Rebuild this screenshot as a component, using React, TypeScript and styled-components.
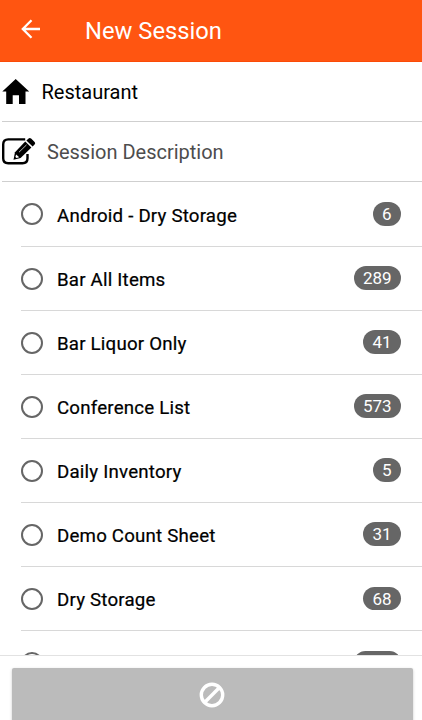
import React from "react";
import styled, { createGlobalStyle } from "styled-components";

const GlobalStyle = createGlobalStyle`
  *, *::before, *::after { box-sizing: border-box; }
  body { margin: 0; background: #fff; overflow: hidden; }
`;

const Screen = styled.div`
  display: flex;
  flex-direction: column;
  width: 100%;
  height: 100vh;
  overflow: hidden;
  background: #fff;
  color: #000;
  font-family: Roboto, "Liberation Sans", sans-serif;
`;

const Header = styled.header`
  display: flex;
  flex: none;
  align-items: center;
  height: 62px;
  padding-left: 21px;
  background: #ff5511;
  border-bottom: 1px solid #fa4b08;
  color: #fff;
`;

const BackButton = styled.button`
  display: flex;
  width: 64px;
  padding: 0;
  border: 0;
  background: none;
  margin-top: -3px;
`;

const Title = styled.h1`
  margin: 0;
  font-size: 23.75px;
  line-height: 30px;
  font-weight: 400;
`;

const Field = styled.div<{ $gap: number; $muted?: boolean }>`
  display: flex;
  flex: none;
  align-items: center;
  gap: ${(p) => p.$gap}px;
  height: 60px;
  margin-left: 2px;
  border-bottom: 1px solid #cfcfcf;
  font-size: 20px;
  line-height: 24px;
  color: ${(p) => (p.$muted ? "#4d4d4d" : "#000")};

  svg { flex: none; }
`;

const List = styled.ul`
  flex: 1;
  min-height: 0;
  margin: 0;
  padding: 0.55px 0 0 21px;
  list-style: none;
  overflow: hidden;
`;

const Row = styled.li`
  display: flex;
  align-items: center;
  height: 64.07px;
  padding-right: 21px;
  border-bottom: 1px solid #d8d8d8;
`;

const Radio = styled.span`
  flex: none;
  width: 22px;
  height: 22px;
  margin: 0.8px 14px 0 0;
  border: 2px solid #666;
  border-radius: 50%;
`;

const Name = styled.span`
  flex: 1;
  padding-top: 3px;
  font-size: 18.7px;
  line-height: 24px;
  letter-spacing: 0.2px;
  -webkit-text-stroke: 0.22px #000;
`;

const Badge = styled.span`
  height: 23.5px;
  margin-bottom: 0.3px;
  padding: 0 9.4px;
  border-radius: 12px;
  background: #666;
  color: #fff;
  font-size: 17px;
  line-height: 25px;
`;

const Footer = styled.footer`
  flex: none;
  height: 65px;
  padding: 12px 9px 0 11.5px;
  border-top: 1px solid #e2e2e2;
  background: #fff;
`;

const SubmitButton = styled.button`
  display: flex;
  justify-content: center;
  width: 100%;
  height: 58px;
  padding: 14px 0 0;
  border: 0;
  border-radius: 2px;
  background: #bbb;
  box-shadow: 0 1px 3px rgba(0, 0, 0, 0.22);
`;

const sheets = [
  { name: "Android - Dry Storage", count: 6 },
  { name: "Bar All Items", count: 289 },
  { name: "Bar Liquor Only", count: 41 },
  { name: "Conference List", count: 573 },
  { name: "Daily Inventory", count: 5 },
  { name: "Demo Count Sheet", count: 31 },
  { name: "Dry Storage", count: 68 },
  { name: "Food Items", count: 124 },
];

const BackIcon = () => (
  <svg width="20" height="20" viewBox="0 0 20 20" fill="none" stroke="#fff" strokeWidth="2.3">
    <path d="M10.5 1.2 L1.8 10 L10.5 18.8 M2 10 H19" />
  </svg>
);

const HomeIcon = () => (
  <svg width="28" height="26" viewBox="0 0 28 26">
    <path d="M13.7 0 L27.2 12.6 H23.5 V25 H17 V16.2 H10.7 V25 H4.2 V12.6 H0.3 Z" />
  </svg>
);

const EditIcon = () => (
  <svg width="34" height="30" viewBox="0 0 34 30" fill="none">
    <path
      d="M23.2 2.4 H6.2 Q1.2 2.4 1.2 7.4 V21.3 Q1.2 26.3 6.2 26.3 H20.5 Q25.5 26.3 25.5 21.3 V17"
      stroke="#000"
      strokeWidth="2.4"
    />
    <g transform="translate(0 -1)">
      <path d="M23.2 5.6 L29.4 11.6 L18.6 22 L11.5 23.8 L13 16.2 Z" fill="#000" />
      <path d="M24.4 4.5 L26.6 2.4 Q27.8 1.3 29.1 2.6 L32.6 6 Q33.8 7.4 32.6 8.6 L30.6 10.5 Z" fill="#000" />
      <path d="M17 16.2 L24.5 8.9" stroke="#bbb" strokeWidth="1" />
      <path d="M14.1 18.4 L17.2 21.3 L14.6 22 L13.4 20.9 Z" fill="#fff" />
    </g>
  </svg>
);

const BlockedIcon = () => (
  <svg width="26" height="26" viewBox="0 0 26 26" fill="none" stroke="#fff" strokeWidth="3.4">
    <circle cx="13" cy="13" r="10.7" />
    <path d="M5.8 20.2 L20.2 5.8" />
  </svg>
);

export default function App() {
  return (
    <Screen>
      <GlobalStyle />
      <Header>
        <BackButton aria-label="Back"><BackIcon /></BackButton>
        <Title>New Session</Title>
      </Header>
      <Field $gap={11.5}>
        <HomeIcon />
        <span>Restaurant</span>
      </Field>
      <Field $gap={11} $muted>
        <EditIcon />
        <span>Session Description</span>
      </Field>
      <List>
        {sheets.map((s) => (
          <Row key={s.name}>
            <Radio />
            <Name>{s.name}</Name>
            <Badge>{s.count}</Badge>
          </Row>
        ))}
      </List>
      <Footer>
        <SubmitButton disabled aria-label="Start session"><BlockedIcon /></SubmitButton>
      </Footer>
    </Screen>
  );
}
